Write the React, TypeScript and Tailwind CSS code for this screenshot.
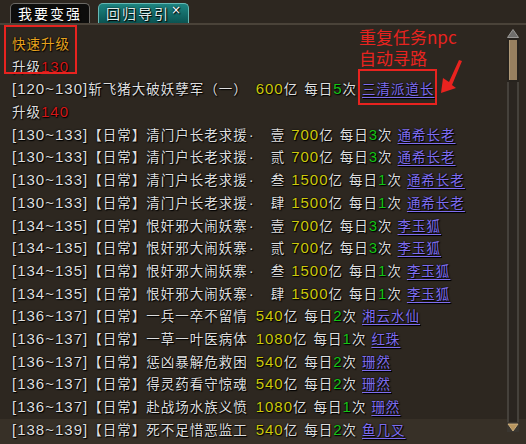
import React from 'react'

type Task = {
  range: string
  tag?: boolean
  name: string
  step?: string
  amount: string
  times: string
  npc: string
}

const NUM = "[font-family:'Liberation_Sans',sans-serif] text-[15px] tracking-[1px]"

const tasks: Task[] = [
  { range: '[130~133]', tag: true, name: '清门户长老求援', step: '壹', amount: '700', times: '3', npc: '通希长老' },
  { range: '[130~133]', tag: true, name: '清门户长老求援', step: '贰', amount: '700', times: '3', npc: '通希长老' },
  { range: '[130~133]', tag: true, name: '清门户长老求援', step: '叁', amount: '1500', times: '1', npc: '通希长老' },
  { range: '[130~133]', tag: true, name: '清门户长老求援', step: '肆', amount: '1500', times: '1', npc: '通希长老' },
  { range: '[134~135]', tag: true, name: '恨奸邪大闹妖寨', step: '壹', amount: '700', times: '3', npc: '李玉狐' },
  { range: '[134~135]', tag: true, name: '恨奸邪大闹妖寨', step: '贰', amount: '700', times: '3', npc: '李玉狐' },
  { range: '[134~135]', tag: true, name: '恨奸邪大闹妖寨', step: '叁', amount: '1500', times: '1', npc: '李玉狐' },
  { range: '[134~135]', tag: true, name: '恨奸邪大闹妖寨', step: '肆', amount: '1500', times: '1', npc: '李玉狐' },
  { range: '[136~137]', tag: true, name: '一兵一卒不留情', amount: '540', times: '2', npc: '湘云水仙' },
  { range: '[136~137]', tag: true, name: '一草一叶医病体', amount: '1080', times: '1', npc: '红珠' },
  { range: '[136~137]', tag: true, name: '惩凶暴解危救困', amount: '540', times: '2', npc: '珊然' },
  { range: '[136~137]', tag: true, name: '得灵药看守惊魂', amount: '540', times: '2', npc: '珊然' },
  { range: '[136~137]', tag: true, name: '赴战场水族义愤', amount: '1080', times: '1', npc: '珊然' },
  { range: '[138~139]', tag: true, name: '死不足惜恶监工', amount: '540', times: '2', npc: '鱼几叉' },
]

function TaskRow({ t }: { t: Task }) {
  return (
    <div className="h-[22.7px] leading-[22.7px] whitespace-nowrap">
      <span className={NUM}>{t.range}</span>
      {t.tag && <span>【日常】</span>}
      <span>{t.name}</span>
      {t.step && (
        <>
          <span className={`ml-[1px] ${NUM}`}>·</span>
          <span className="ml-[16px]">{t.step}</span>
        </>
      )}
      <span className={`${t.step ? 'ml-[6px]' : 'ml-[8px]'} ${NUM} text-[#cdc90c]`}>{t.amount}</span>
      <span>亿</span>
      <span className="ml-[6px]">每日</span>
      <span className={`${NUM} text-[#16c416]`}>{t.times}</span>
      <span>次</span>
      <a className="ml-[5px] text-[#7f6def] underline underline-offset-[3px] cursor-pointer">{t.npc}</a>
    </div>
  )
}

function Scrollbar() {
  return (
    <div className="w-[12px] mt-[4px] mb-[10px] mr-[7px] flex flex-col items-center">
      <svg width="12" height="9" viewBox="0 0 12 9">
        <polygon points="6,0.5 11.5,8.5 0.5,8.5" fill="#6f6e6c" stroke="#9a9996" strokeWidth="1" />
      </svg>
      <div className="w-[12px] h-[44px] border-2 border-[#27231e] bg-[#97805f] shadow-[inset_1px_0_0_#b09a78]" />
      <div className="w-[12px] flex-1 border-x-2 border-[#45413b] bg-[#2a2520]" />
      <svg width="12" height="10" viewBox="0 0 12 10">
        <rect x="0" y="0" width="12" height="10" fill="#3a3630" />
        <polygon points="1,2 11,2 6,9" fill="#b8955e" stroke="#d8b985" strokeWidth="0.8" />
      </svg>
    </div>
  )
}

export default function App() {
  return (
    <div className="relative w-[526px] h-[444px] overflow-hidden bg-[linear-gradient(to_bottom,#2d2720_419px,#373027_419px)] text-[#dedede] text-[13.5px] tracking-[1px] [font-family:'Noto_Sans_CJK_SC',sans-serif] [text-shadow:0_0_2px_#000,1px_1px_1px_#000]">
      {/* tabs */}
      <div className="h-[25px] flex items-end gap-[8px] pl-[10px] border-b-2 border-[#4a4339]">
        <div className="w-[80px] h-[20px] rounded-t-[5px] border border-b-0 border-[#6c6a66] bg-[#0d0d0c] pl-[7px] text-[14px] leading-[19px] text-white tracking-[2px]">
          我要变强
        </div>
        <div className="relative w-[91px] h-[20px] rounded-t-[5px] border border-b-0 border-[#66b8b4] bg-[linear-gradient(to_bottom,#1d8582,#0b5452)] pl-[7px] text-[14px] leading-[19px] text-[#dfeceb] tracking-[2px]">
          回归导引
          <span className="absolute right-[5px] top-[-3px] text-[12px] text-white [font-family:'DejaVu_Sans',sans-serif]">×</span>
        </div>
      </div>

      <div className="flex h-[417px]">
        <div className="flex-1 pl-[12px] pt-[7px]">
          <div className="h-[22.7px] leading-[22.7px] text-[#e6a21e]">快速升级</div>
          <div className="h-[22.7px] leading-[22.7px]">
            升级<span className={`${NUM} text-[#d41818]`}>130</span>
          </div>
          <div className="h-[22.7px] leading-[22.7px] whitespace-nowrap">
            <span className={NUM}>[120~130]</span>
            <span>斩飞猪大破妖孽军（一）</span>
            <span className={`ml-[8px] ${NUM} text-[#cdc90c]`}>600</span>
            <span>亿</span>
            <span className="ml-[6px]">每日</span>
            <span className={`${NUM} text-[#16c416]`}>5</span>
            <span>次</span>
            <a className="ml-[5px] text-[#7f6def] underline underline-offset-[3px] cursor-pointer">三清派道长</a>
          </div>
          <div className="h-[22.7px] leading-[22.7px]">
            升级<span className={`${NUM} text-[#d41818]`}>140</span>
          </div>
          {tasks.map((t, i) => (
            <TaskRow key={i} t={t} />
          ))}
        </div>
        <Scrollbar />
      </div>

      {/* annotations */}
      <div className="absolute left-[4px] top-[25px] w-[73px] h-[49px] border-2 border-[#e8231f]" />
      <div className="absolute left-[358px] top-[69px] w-[79px] h-[36px] border-2 border-[#e8231f]" />
      <div className="absolute left-[359px] top-[26px] text-[17px] leading-[21px] tracking-[0px] text-[#e8231f] [text-shadow:none]">
        <div>重复任务npc</div>
        <div>自动寻路</div>
      </div>
      <svg className="absolute left-[438px] top-[58px]" width="26" height="38" viewBox="438 58 26 38">
        <polygon points="441,93 443,78 449,82 459,60 462,61 452,85 456,88" fill="#e8231f" />
      </svg>
    </div>
  )
}
